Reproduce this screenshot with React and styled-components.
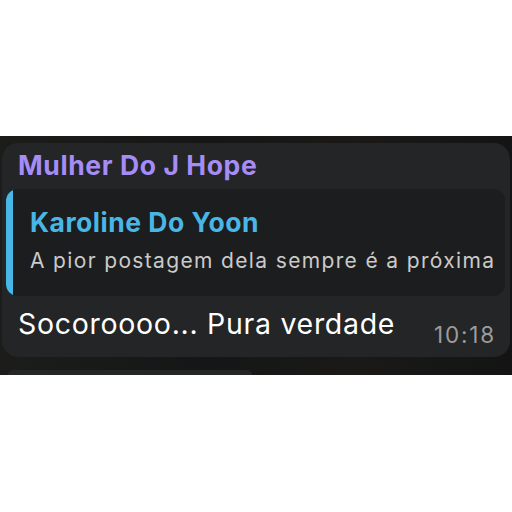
import React from "react";
import styled, { createGlobalStyle } from "styled-components";

const Global = createGlobalStyle`
  html, body { margin: 0; padding: 0; background: #ffffff; }
  body { font-family: Inter, "Liberation Sans", Arial, sans-serif; }
`;

const Page = styled.div`
  width: 512px;
  height: 512px;
  padding-top: 136px;
  box-sizing: border-box;
  background: #ffffff;
`;

const Band = styled.div`
  background: linear-gradient(90deg, #1c1c1b 0%, #161616 40%, #1a1918 70%, #141414 100%);
  padding: 7px 2px 0 2px;
  height: 239px;
  box-sizing: border-box;
  display: flex;
  flex-direction: column;
`;

const Bubble = styled.div`
  width: 508px;
  background: #232526;
  border-radius: 16px;
  padding: 6px 0 16px 0;
  box-sizing: border-box;
`;

const NextBubble = styled.div`
  margin: auto 0 0 6px;
  width: 244px;
  height: 5px;
  background: #242626;
  border-radius: 8px 8px 0 0;
`;

const Sender = styled.div`
  padding-left: 16px;
  font-size: 26.5px;
  font-weight: 700;
  line-height: 32px;
  color: #a68cf7;
  letter-spacing: 0.6px;
`;

const Quote = styled.div`
  margin: 8px 5px 0 4px;
  background: #1c1d1e;
  border-radius: 12px;
  display: flex;
  overflow: hidden;
`;

const QuoteBar = styled.div`
  width: 7px;
  flex: none;
  background: #49b7e6;
`;

const QuoteBody = styled.div`
  padding: 18px 0 22px 17px;
  display: flex;
  flex-direction: column;
  gap: 11px;
`;

const QuoteName = styled.div`
  font-size: 26.5px;
  font-weight: 700;
  line-height: 30px;
  color: #49b7e6;
  letter-spacing: 0.5px;
`;

const QuoteText = styled.div`
  font-size: 21px;
  line-height: 26px;
  color: #cacaca;
  letter-spacing: 1.35px;
`;

const MessageRow = styled.div`
  display: flex;
  align-items: flex-end;
  justify-content: space-between;
  padding: 11px 16px 0 16px;
`;

const MessageText = styled.div`
  font-size: 28.5px;
  line-height: 34px;
  color: #ffffff;
  letter-spacing: 0.7px;
`;

const Time = styled.div`
  font-size: 22.5px;
  line-height: 26px;
  color: #9b9c9d;
  letter-spacing: 1.8px;
  margin-right: -2px;
  margin-bottom: -7px;
`;

export default function App() {
  return (
    <Page>
      <Global />
      <Band>
        <Bubble>
          <Sender>Mulher Do J Hope</Sender>
          <Quote>
            <QuoteBar />
            <QuoteBody>
              <QuoteName>Karoline Do Yoon</QuoteName>
              <QuoteText>A pior postagem dela sempre é a próxima</QuoteText>
            </QuoteBody>
          </Quote>
          <MessageRow>
            <MessageText>Socoroooo... Pura verdade</MessageText>
            <Time>10:18</Time>
          </MessageRow>
        </Bubble>
        <NextBubble />
      </Band>
    </Page>
  );
}
